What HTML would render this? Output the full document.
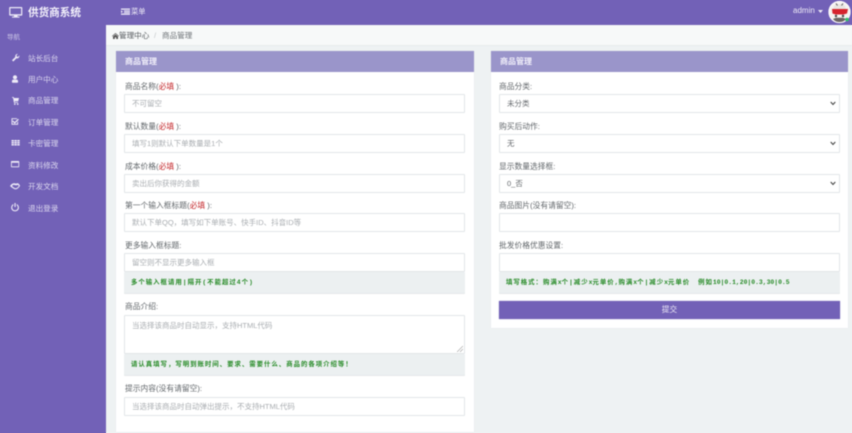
<!DOCTYPE html>
<html lang="zh-CN"><head><meta charset="utf-8"><title>供货商系统</title>
<style>
*{box-sizing:border-box;margin:0;padding:0}
html,body{width:852px;height:433px;overflow:hidden;background:#eef2f3}
body{font-family:"Liberation Sans","Noto Sans CJK SC",sans-serif;font-size:7.7px;color:#5f6468;position:relative;background:linear-gradient(#7261b7,#7261b7) 0 0/106px 100% no-repeat,linear-gradient(#7261b7,#7261b7) 0 0/100% 25px no-repeat,#eef2f3}
#w{position:absolute;left:0;top:0;width:852px;height:433px;filter:blur(.42px);background:#eef2f3;overflow:hidden}
.a{position:absolute;white-space:nowrap;line-height:10px}
.side{left:0;top:0;width:106px;height:433px;background:#7261b7}
.top{left:106px;top:0;width:746px;height:25px;background:#7261b7}
.crumb{left:106px;top:25px;width:746px;height:21px;background:#f7f9f9;border-bottom:1px solid #e8ecec}
.w{color:#ece9f6}
.nav{left:28px;color:#dcd8ef;font-size:7.6px}
.ic{position:absolute;left:0;top:0}
.panel{background:#fff;box-shadow:0 0 1px #dfe3e5}
.head{background:#9a95ca;color:#f1effa;font-size:8px;font-weight:bold;line-height:22px;height:21px;padding-left:9px}
.in{position:absolute;background:#fff;border:1px solid #e2e6e8;border-radius:1px;height:19px;line-height:18px;padding-left:7px;color:#a9adb1;font-size:7.5px;white-space:nowrap;overflow:hidden}
.val{color:#666a6e}
.help{position:absolute;background:#ecf0f1;border-radius:1px;height:21px;line-height:21px;padding-left:7px;color:#268a26;font-family:"Liberation Mono","Noto Sans CJK SC",monospace;font-size:6.4px;letter-spacing:1px;font-weight:bold;white-space:nowrap;box-shadow:0 1px 0 #e4e8ea}
.help i{font-style:normal;font-size:6.4px;letter-spacing:0}
.l{color:#62676b;font-size:7.75px}
.l b{color:#c3262a;font-weight:normal}
.arrow{position:absolute;right:3px;top:6px}
</style></head><body>
<div id="w">
<div class="a side"></div><div class="a top"></div><div class="a crumb"></div>

<svg class="ic" width="106" height="220" viewBox="0 0 106 220" fill="#eeebf8">
<path d="M10 7h11.500a.8.8 0 0 1 .8.8v7a.8.8 0 0 1-.8.800h-4v1h2v1h-7.500v-1h2v-1H10a.8.800 0 0 1-.8-.8v-7A.8.800 0 0 1 10 7zm.4 1.200v6h10.700v-6z"/>
<path d="M12 60.300l3.300-3.300c-.3-1.200.2-2.300 1.200-2.900.4-.2.900-.3 1.400-.2l-1.400 1.500.3 1.200 1.200.3 1.400-1.500c.2 1.200-.4 2.200-1.200 2.700-.6.300-1.200.3-1.700.2l-3.200 3.200z"/>
<path d="M15 75.200a2.100 2.100 0 1 1 0 4.200 2.100 2.100 0 0 1 0-4.200zM13 79.600h4c.6 0 1.100 1 1.100 2.300 0 .5-.3.8-.8.800h-4.600c-.5 0-.8-.3-.8-.8 0-1.300.5-2.300 1.100-2.300z"/>
<path d="M12 97h1.700l.3 1h5l-.8 3.300h-3.600l.2.800h3.300v.8h-4.100l-1-5.100H12z"/><circle cx="14.800" cy="104.100" r=".8"/><circle cx="17.700" cy="104.100" r=".8"/>
<path d="M11.500 118.200h5.500v.9h-4.600v4.700h4.800v-1.700l.9-.9v3.500h-6.600z"/><path d="M13.200 120.500l1.500 1.500 3.300-3.300.9.900-4.200 4.200-2.400-2.400z"/>
<path d="M11.500 140h2.400v1.500h-2.400zM14.400 140h2.400v1.500h-2.400zM17.300 140h2.400v1.500h-2.400zM11.500 142h2.400v1.500h-2.400zM14.400 142h2.400v1.500h-2.400zM17.300 142h2.400v1.500h-2.400zM11.500 144h2.400v1.500h-2.400zM14.400 144h2.400v1.500h-2.400zM17.300 144h2.400v1.500h-2.400z"/>
<path d="M11.600 161h7a.6.600 0 0 1 .6.600v5a.6.600 0 0 1-.6.600h-7a.6.600 0 0 1-.6-.6v-5a.6.600 0 0 1 .6-.6zm.2 1.700v3.700h6.600v-3.700z"/>
<path d="M10 186c1.200-1.500 2.500-2.700 3.800-2.700.9 0 1.400.3 2.200.3.900 0 1.400-.5 2.100-.2.700.3 1.300 1.300 2 2.400-.6.900-1.300 1.800-2.100 2.400-.7.600-1.500 1.100-2.500 1.100-.9 0-1.600-.4-2.300-.9-1.100-.6-2-1.400-3.200-2.400zm3.400-1.200l-1.500 1.200 1.600 1.200c.8.600 1.400 1 2.100 1 .7 0 1.400-.4 2.100-1l1.200-1.200-.9-1.100c-.8.300-1.500.5-2.400.4-1-.1-1.600-.6-2.200-.5z"/>
<path d="M14.500 203h1.100v4h-1.100z"/><path d="M13.400 204v1.200a2.800 2.800 0 1 0 3.300 0V204a3.900 3.900 0 1 1-3.300 0z"/>
</svg>

<div class="a" style="left:28px;top:7px;font-size:10.6px;font-weight:bold;color:#f3f1fb;line-height:12px">供货商系统</div>
<div class="a" style="left:7px;top:33px;font-size:6.5px;color:#cfcae8">导航</div>
<div class="a nav" style="top:54px">站长后台</div>
<div class="a nav" style="top:75px">用户中心</div>
<div class="a nav" style="top:96px">商品管理</div>
<div class="a nav" style="top:118px">订单管理</div>
<div class="a nav" style="top:139px">卡密管理</div>
<div class="a nav" style="top:161px">资料修改</div>
<div class="a nav" style="top:182px">开发文档</div>
<div class="a nav" style="top:204px">退出登录</div>

<svg class="ic" style="left:121px;top:8px" width="9" height="7" viewBox="0 0 9 7" fill="#f1effa"><path d="M0 .5h9v1.200H0zM3 2.500h6v1H3zM3 4h6v1H3zM0 5.500h9v1.200H0zM0 2.400l2 1.300-2 1.300z"/></svg>
<div class="a w" style="left:131px;top:7px;font-size:7.3px">菜单</div>
<div class="a w" style="left:793px;top:6px;font-size:8px">admin</div>
<svg class="ic" style="left:818px;top:10px" width="5" height="3"><path d="M0 0h5L2.500 3z" fill="#ece9f6"/></svg>

<svg class="ic" style="left:828px;top:0" width="24" height="25" viewBox="0 0 24 25">
<circle cx="11.500" cy="12" r="11" fill="#f6f3f1"/>
<path d="M5 9c1-4 3-5 6.500-5S17 5 18 9v3H5z" fill="#e9e5e2"/>
<path d="M4 9h16l-1 4.500-3.500 1h-8L4.500 13.500z" fill="#d6232d"/>
<circle cx="8" cy="16" r="1.200" fill="#444"/><circle cx="15" cy="16" r="1.200" fill="#444"/>
<path d="M5 19c2 2.500 4 3 6.500 3s4.500-.5 6.500-3l-3-1.300H8z" fill="#6a6563"/>
<path d="M8 3.500l1.500 2M15 3.500L13.500 5.500" stroke="#555" stroke-width="1"/>
<circle cx="11.500" cy="12" r="10.700" fill="none" stroke="#fff" stroke-width=".8"/>
<circle cx="19" cy="19.500" r="1.800" fill="#2fc26a"/>
</svg>

<svg class="ic" style="left:112px;top:33px" width="7" height="6" viewBox="0 0 7 6" fill="#555"><path d="M3.500 0L7 3l-.4.500-3.100-2.600L.4 3.500 0 3zM1 3.500l2.500-2 2.500 2V6H4.200V4.300H2.800V6H1z"/></svg>
<div class="a" style="left:119px;top:31px;color:#55595d;font-size:7.6px">管理中心</div>
<div class="a" style="left:154px;top:31px;color:#c3c7ca;font-size:7.7px">/</div>
<div class="a" style="left:162px;top:31px;color:#6d7276;font-size:7.6px">商品管理</div>

<div class="a panel" style="left:116px;top:51px;width:358px;height:381px"><div class="head">商品管理</div></div>
<div class="a panel" style="left:491px;top:51px;width:357px;height:277px"><div class="head">商品管理</div></div>

<div class="a l" style="left:125px;top:82px">商品名称(<b>必填</b> ):</div>
<div class="in" style="left:124px;top:94px;width:341px">不可留空</div>
<div class="a l" style="left:125px;top:122px">默认数量(<b>必填</b> ):</div>
<div class="in" style="left:124px;top:134px;width:341px">填写1则默认下单数量是1个</div>
<div class="a l" style="left:125px;top:162px">成本价格(<b>必填</b> ):</div>
<div class="in" style="left:124px;top:174px;width:341px">卖出后你获得的金额</div>
<div class="a l" style="left:125px;top:201px">第一个输入框标题(<b>必填</b> ):</div>
<div class="in" style="left:124px;top:213px;width:341px">默认下单QQ，填写如下单账号、快手ID、抖音ID等</div>
<div class="a l" style="left:125px;top:241px">更多输入框标题:</div>
<div class="in" style="left:124px;top:253px;width:341px">留空则不显示更多输入框</div>
<div class="help" style="left:124px;top:272px;width:341px">多个输入框请用|隔开(不能超过4个)</div>
<div class="a l" style="left:125px;top:302px">商品介绍:</div>
<div class="in" style="left:124px;top:315px;width:341px;height:39px;line-height:19px">当选择该商品时自动显示，支持HTML代码
<svg style="position:absolute;right:1px;bottom:1px" width="6" height="6"><path d="M0 6L6 0M3 6l3-3" stroke="#9a9a9a" stroke-width=".6"/></svg></div>
<div class="help" style="left:124px;top:354px;width:341px">请认真填写，写明到账时间、要求、需要什么、商品的各项介绍等！</div>
<div class="a l" style="left:125px;top:384px">提示内容(没有请留空):</div>
<div class="in" style="left:124px;top:397px;width:341px">当选择该商品时自动弹出提示，不支持HTML代码</div>

<div class="a l" style="left:499px;top:82px">商品分类:</div>
<div class="in val" style="left:499px;top:94px;width:341px">未分类<svg class="arrow" width="6" height="5"><path d="M.7 1l2.300 2.500L5.300 1" fill="none" stroke="#444" stroke-width="1.100"/></svg></div>
<div class="a l" style="left:499px;top:122px">购买后动作:</div>
<div class="in val" style="left:499px;top:134px;width:341px">无<svg class="arrow" width="6" height="5"><path d="M.7 1l2.300 2.500L5.300 1" fill="none" stroke="#444" stroke-width="1.100"/></svg></div>
<div class="a l" style="left:499px;top:162px">显示数量选择框:</div>
<div class="in val" style="left:499px;top:174px;width:341px">0_否<svg class="arrow" width="6" height="5"><path d="M.7 1l2.300 2.500L5.300 1" fill="none" stroke="#444" stroke-width="1.100"/></svg></div>
<div class="a l" style="left:499px;top:201px">商品图片(没有请留空):</div>
<div class="in" style="left:499px;top:213px;width:341px"></div>
<div class="a l" style="left:499px;top:241px">批发价格优惠设置:</div>
<div class="in" style="left:499px;top:253px;width:341px"></div>
<div class="help" style="left:499px;top:272px;width:341px">填写格式：购满<i>x</i>个|减少<i>x</i>元单价<i>,</i>购满<i>x</i>个|减少<i>x</i>元单价<span style="margin-left:8px">例如</span><i>10|0.1,20|0.3,30|0.5</i></div>
<div class="a" style="left:499px;top:301px;width:341px;height:18px;background:#7261b7;color:#eeebf7;text-align:center;line-height:18px;font-size:7.7px;box-shadow:0 0 1px #9a95ca">提交</div>
</div>
</body></html>
